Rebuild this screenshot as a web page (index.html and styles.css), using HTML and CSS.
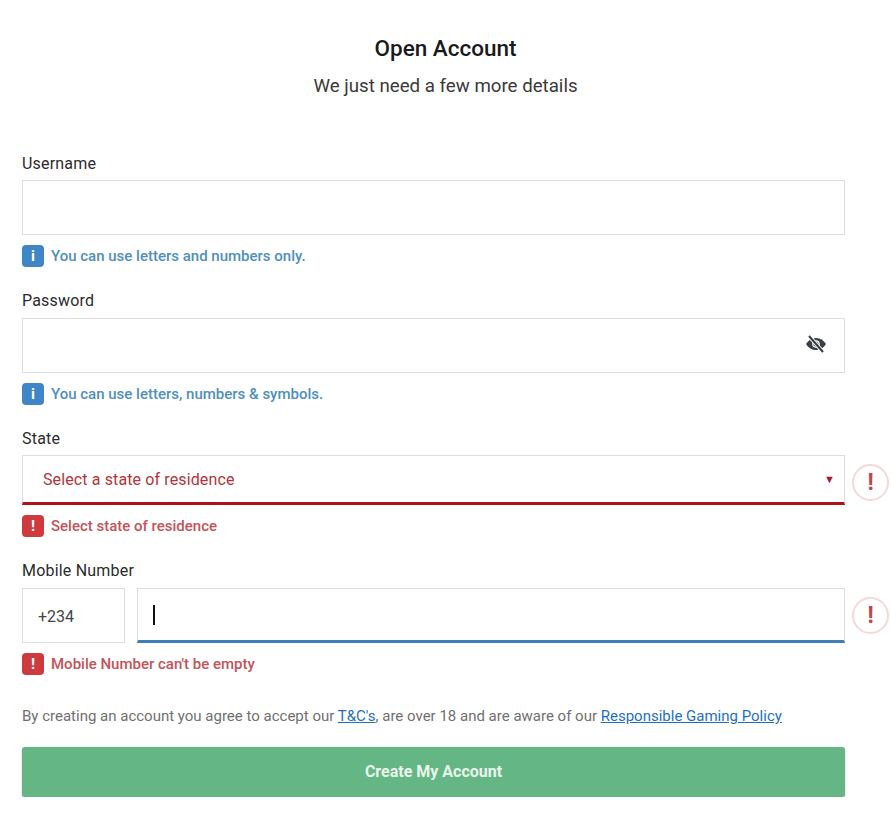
FILE: index.html
```html
<!DOCTYPE html>
<html lang="en">
<head>
    <meta charset="UTF-8">
    <title>Open Account</title>
    <link rel="stylesheet" href="styles.css">
</head>
<body>

    <header class="title">
        <h1>Open Account</h1>
        <p>We just need a few more details</p>
    </header>

    <form class="form">
        <div class="field field-username">
            <label>Username</label>
            <div class="box"></div>
            <div class="hint hint-info"><span class="badge">i</span>You can use letters and numbers only.</div>
        </div>

        <div class="field field-password">
            <label>Password</label>
            <div class="box box-password">
                <svg class="eye" width="22" height="18" viewBox="0 0 22 18">
                    <path d="M1 9c2.500-4 5.800-6 10-6s7.500 2 10 6c-2.500 4-5.800 6-10 6S3.500 13 1 9z" fill="#3a3f47"/>
                    <circle cx="11" cy="9" r="3.800" fill="#fff"/>
                    <circle cx="11" cy="9" r="2.600" fill="#3a3f47"/>
                    <path d="M4 1l14 16" stroke="#fff" stroke-width="4"/>
                    <path d="M4 1l14 16" stroke="#3a3f47" stroke-width="2"/>
                </svg>
            </div>
            <div class="hint hint-info"><span class="badge">i</span>You can use letters, numbers &amp; symbols.</div>
        </div>

        <div class="field field-state">
            <label>State</label>
            <div class="row">
                <div class="box box-select">
                    <span>Select a state of residence</span>
                    <span class="arrow">▼</span>
                </div>
                <span class="alert">!</span>
            </div>
            <div class="hint hint-error"><span class="badge">!</span>Select state of residence</div>
        </div>

        <div class="field field-mobile">
            <label>Mobile Number</label>
            <div class="row">
                <div class="box box-code">+234</div>
                <div class="box box-number"><span class="caret"></span></div>
                <span class="alert">!</span>
            </div>
            <div class="hint hint-error"><span class="badge">!</span>Mobile Number can't be empty</div>
        </div>

        <p class="terms">By creating an account you agree to accept our <a href="#">T&amp;C's</a>, are over 18 and are aware of our <a href="#">Responsible Gaming Policy</a></p>

        <button class="submit" type="button">Create My Account</button>
    </form>

</body>
</html>
```

FILE: styles.css
```css
body {
    font-family: Roboto, Arial, sans-serif;
    margin: 0;
    padding: 0;
    background-color: #fff;
    color: #222;
}

.title {
    text-align: center;
    padding-top: 35px;
}
.title h1 {
    margin: 0;
    font-size: 22.500px;
    line-height: 27px;
    font-weight: 500;
    color: #1a1a1a;
}
.title p {
    margin: 13px 0 0;
    font-size: 18.700px;
    line-height: 22px;
    color: #3a3a3a;
}

.form {
    padding: 0 46px 0 22px;
    margin-top: 57px;
}

.field label {
    display: block;
    font-size: 16px;
    line-height: 19px;
    letter-spacing: 0.2px;
    color: #2b2b2b;
    margin-bottom: 8px;
}
.field-username label,
.field-state label {
    margin-bottom: 7px;
}
.field-password {
    margin-top: 24px;
}
.field-state {
    margin-top: 24px;
}
.field-mobile {
    margin-top: 24px;
}

.row {
    display: flex;
    gap: 12px;
    position: relative;
}

.box {
    box-sizing: border-box;
    height: 55px;
    border: 1px solid #ddd;
    background-color: #fff;
}
.box-password {
    display: flex;
    align-items: center;
    justify-content: flex-end;
    padding-right: 17px;
}
.eye {
    margin-bottom: 3px;
}
.box-select {
    flex: 1;
    height: 50px;
    display: flex;
    align-items: center;
    justify-content: space-between;
    padding: 0 9px 0 20px;
    border-bottom: 3px solid #b01116;
    color: #b5333a;
    font-size: 16px;
    letter-spacing: 0.12px;
}
.arrow {
    font-size: 11px;
    color: #a8182e;
}
.box-code {
    width: 103px;
    display: flex;
    align-items: center;
    padding: 1px 0 0 15px;
    font-size: 16px;
    color: #444;
}
.box-number {
    flex: 1;
    display: flex;
    align-items: center;
    padding-left: 15px;
    border-bottom: 3px solid #3f7fb8;
}
.caret {
    width: 2px;
    height: 20px;
    background-color: #111;
}

.alert {
    position: absolute;
    left: 830px;
    top: 9px;
    box-sizing: border-box;
    width: 37px;
    height: 37px;
    border: 2px solid #f5d9d9;
    border-radius: 50%;
    text-align: center;
    font-size: 23px;
    line-height: 33px;
    font-weight: 700;
    color: #c4444a;
}

.hint {
    display: flex;
    align-items: center;
    gap: 7px;
    margin-top: 10px;
    font-size: 15px;
    line-height: 22px;
    font-weight: 500;
}
.hint-info {
    color: #4f90bd;
}
.hint-error {
    color: #c6525a;
}
.badge {
    width: 22px;
    height: 22px;
    border-radius: 4px;
    color: #fff;
    font-size: 15px;
    font-weight: 700;
    text-align: center;
}
.hint-info .badge {
    background-color: #3f86c6;
}
.hint-error .badge {
    background-color: #cf3a3e;
}

.terms {
    margin: 32px 0 0;
    font-size: 15px;
    line-height: 18px;
    color: #707070;
}
.terms a {
    color: #1f6fbf;
}

.submit {
    display: block;
    width: 100%;
    height: 50px;
    margin-top: 22px;
    padding: 0 6px 2px;
    border: 0;
    border-radius: 3px;
    background-color: #65b685;
    box-shadow: 0 1px 2px rgba(0,0,0,0.3);
    color: #e8f5ec;
    font-family: inherit;
    font-size: 16px;
    font-weight: 700;
}
```
